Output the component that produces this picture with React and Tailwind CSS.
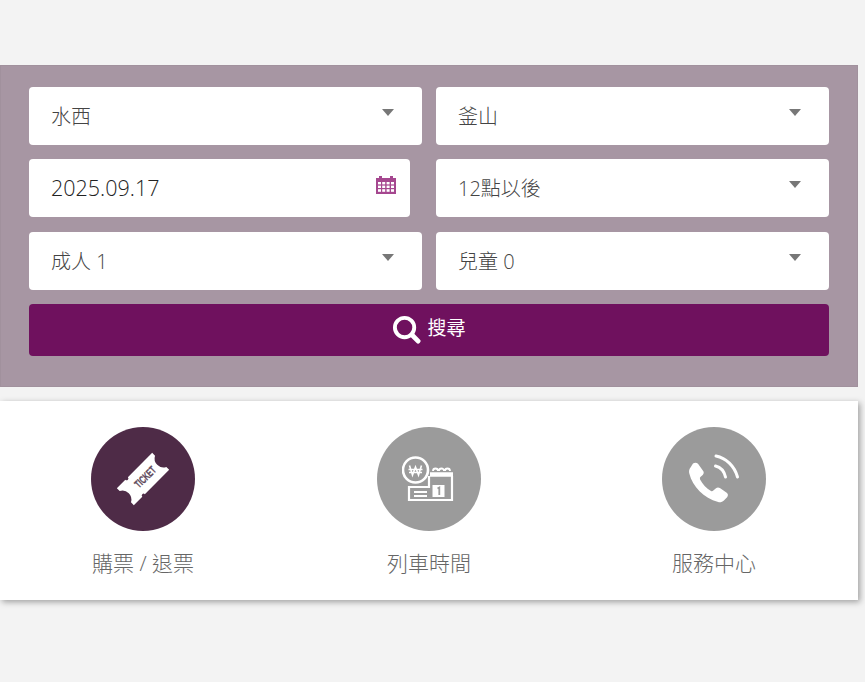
const font = { fontFamily: '"Open Sans","Noto Sans CJK TC",sans-serif' };

function Caret() {
  return <span className="absolute right-[28px] top-[22px] w-0 h-0 border-x-[6px] border-x-transparent border-t-[7px] border-t-[#777777]" />;
}

function Field({ label, width = "w-full", caret = true, children, cls = "text-[20px] text-[#444444] pt-[2px]" }) {
  return (
    <div className={`relative h-[58px] ${width} rounded-[4px] bg-white flex items-center pl-[22px] font-light ${cls}`}>
      <span>{label}</span>
      {caret && <Caret />}
      {children}
    </div>
  );
}

function CalendarIcon() {
  return (
    <svg className="absolute right-[14px] top-[17px]" width="20" height="18" viewBox="0 0 20 18">
      <path fill="#a5478f" d="M0 2h3V0h3v2h8V0h3v2h3v16H0z" />
      <g fill="#ffffff">
        <rect x="2" y="6" width="3" height="2.4" /><rect x="6.2" y="6" width="3" height="2.4" /><rect x="10.6" y="6" width="3" height="2.4" /><rect x="15" y="6" width="3" height="2.4" />
        <rect x="2" y="9.6" width="3" height="2.4" /><rect x="6.2" y="9.6" width="3" height="2.4" /><rect x="10.6" y="9.6" width="3" height="2.4" /><rect x="15" y="9.6" width="3" height="2.4" />
        <rect x="2" y="13.2" width="3" height="2.6" /><rect x="6.2" y="13.2" width="3" height="2.6" /><rect x="10.6" y="13.2" width="3" height="2.6" /><rect x="15" y="13.2" width="3" height="2.6" />
      </g>
    </svg>
  );
}

function SearchIcon() {
  return (
    <svg width="29" height="29" viewBox="0 0 30 30" fill="none" stroke="#ffffff">
      <circle cx="13" cy="13" r="10" strokeWidth="4" />
      <path d="M20.5 20.5L27 27" strokeWidth="5" strokeLinecap="round" />
    </svg>
  );
}

function TicketIcon() {
  return (
    <svg width="54" height="54" viewBox="0 0 54 54">
      <g transform="rotate(-45 27 27)">
        <path fill="#ffffff" d="M2 15h12a1.800 1.800 0 0 0 3.600 0H52v4a9 9 0 0 0 0 16v4H17.600a1.800 1.800 0 0 0-3.600 0H2v-4a9 9 0 0 0 0-16z" />
        <text x="30" y="31" textAnchor="middle" fontSize="11" fontWeight="700" fill="#5f4a5c" stroke="#5f4a5c" strokeWidth="0.3" textLength="25" lengthAdjust="spacingAndGlyphs" style={{ fontFamily: '"Liberation Sans",sans-serif' }}>TICKET</text>
      </g>
    </svg>
  );
}

function ScheduleIcon() {
  return (
    <svg width="54" height="54" viewBox="0 0 54 54" fill="none" stroke="#ffffff">
      <circle cx="13.500" cy="18" r="12.500" strokeWidth="2.600" />
      <path strokeWidth="1.600" d="M7.500 13.500l3 9.500 3-8 3 8 3-9.500M6.500 17.500h14M7 20.500h13" />
      <path strokeWidth="2.200" d="M27 24v11H7v13h43V24" />
      <path strokeWidth="1.800" d="M31 19a2.500 2.500 0 0 1 5 0M37 19a2.500 2.500 0 0 1 5 0M43 19a2.500 2.500 0 0 1 5 0" />
      <path strokeWidth="4.500" d="M28 22.500h23" />
      <rect x="30.500" y="33" width="12" height="12" fill="#ffffff" stroke="none" />
      <path stroke="#9b9b9b" strokeWidth="1.800" d="M35.500 36.500l1.800-1v7.500" />
      <path strokeWidth="2" d="M12 40h13M12 44h13" />
    </svg>
  );
}

function PhoneIcon() {
  return (
    <svg width="54" height="54" viewBox="0 0 54 54" fill="none">
      <path fill="#ffffff" d="M6 11.500c1.700-1.300 3.900-1.100 5 .3l5.200 7.200c.9 1.300.6 2.900-.5 3.900l-2.300 2.200c-.6.700-.7 1.500-.3 2.300 2.300 4.600 6.200 8.800 10.900 11.500.8.400 1.600.3 2.300-.3l2.700-2.400c1.100-1 2.700-1 3.900-.2l6.800 4.800c1.500 1 1.600 3 .4 4.400l-3.200 3.300c-1.500 1.500-3.700 2.100-5.700 1.600C16.700 46 5.700 34.800 2.300 21.500c-.6-2.300-.1-4.400 1.200-6.100z" />
      <path stroke="#ffffff" strokeWidth="3" strokeLinecap="round" d="M28.500 14c5 1.200 8.700 5.300 10 11" />
      <path stroke="#ffffff" strokeWidth="3" strokeLinecap="round" d="M29 4c10 2 18.500 10 21.500 21" />
    </svg>
  );
}

function Tile({ label, bg, children }) {
  return (
    <div className="flex flex-col items-center">
      <div className={`w-[104px] h-[104px] rounded-full flex items-center justify-center ${bg}`}>{children}</div>
      <div className="mt-[18px] text-[21px] leading-[28px] font-light text-[#666666]">{label}</div>
    </div>
  );
}

export default function App() {
  return (
    <div style={font} className="min-h-[682px] bg-[#f3f3f3] pt-[65px] overflow-hidden">
      <div className="w-[858px] h-[322px] bg-[#a796a3] shadow-[inset_0_0_0_1px_rgba(0,0,0,0.03)] pt-[22px] px-[29px]">
        <div className="grid grid-cols-2 gap-x-[14px] gap-y-[14.4px]">
          <Field label="水西" />
          <Field label="釜山" />
          <Field label="2025.09.17" width="w-[381px]" caret={false} cls="text-[21.5px] text-[#222222]"><CalendarIcon /></Field>
          <Field label="12點以後" />
          <Field label="成人 1" />
          <Field label="兒童 0" />
        </div>
        <button className="mt-[14px] w-full h-[52px] rounded-[4px] bg-[#6f115e] flex items-center justify-center gap-[6px] text-white text-[19px]">
          <SearchIcon />
          <span className="pb-[3px]">搜尋</span>
        </button>
      </div>
      <div className="mt-[14px] w-[858px] h-[199px] bg-white shadow-[2px_2px_6px_rgba(0,0,0,0.35)] grid grid-cols-[286px_286px_284px] pt-[26px]">
        <Tile label="購票 / 退票" bg="bg-[#4e2b47]"><TicketIcon /></Tile>
        <Tile label="列車時間" bg="bg-[#9b9b9b]"><ScheduleIcon /></Tile>
        <Tile label="服務中心" bg="bg-[#9b9b9b]"><PhoneIcon /></Tile>
      </div>
    </div>
  );
}
